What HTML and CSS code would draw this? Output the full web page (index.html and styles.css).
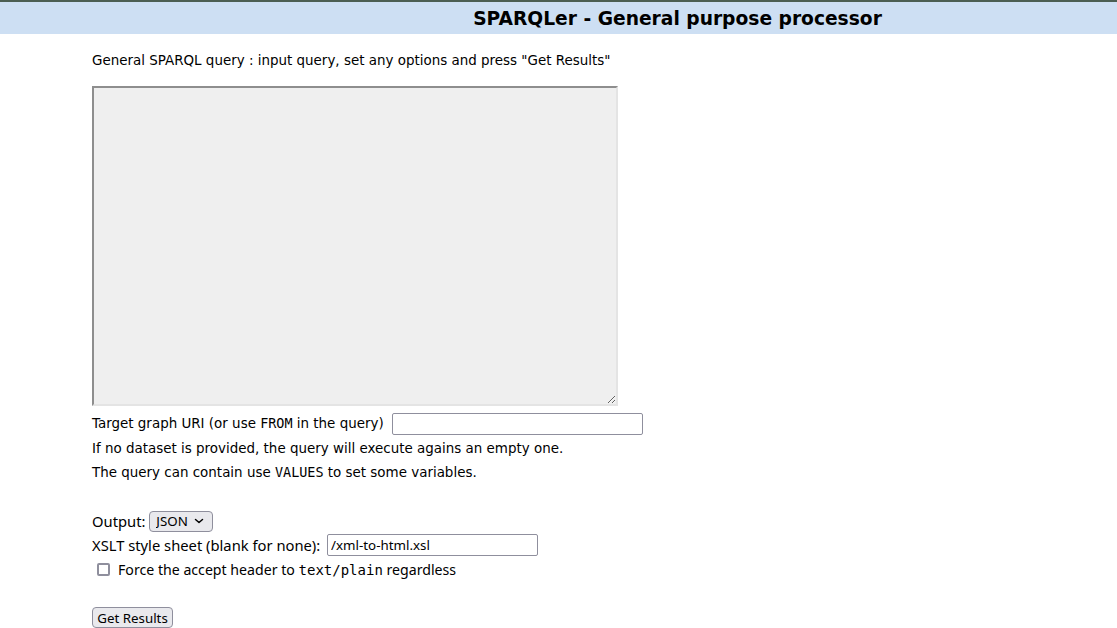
FILE: index.html
```html
<!DOCTYPE html>
<html>
<head>
<meta charset="utf-8">
<title>SPARQLer</title>
<link rel="stylesheet" href="styles.css">
</head>
<body>
<div class="header"><h1>SPARQLer - General purpose processor</h1></div>
<div class="content">
  <p class="intro">General SPARQL query : input query, set any options and press "Get Results"</p>
  <form class="form">
    <textarea class="query" name="query"></textarea>
    <div class="line first">Target graph URI (or use <code>FROM</code> in the query) <input class="graph" type="text" name="default-graph-uri"></div>
    <div class="line">If no dataset is provided, the query will execute agains an empty one.</div>
    <div class="line">The query can contain use <code>VALUES</code> to set some variables.</div>
    <div class="opts">
      <div class="oline">Output: <select class="sel"><option>JSON</option></select></div>
      <div class="oline">XSLT style sheet (blank for none): <input class="xslt" type="text" value="/xml-to-html.xsl"></div>
      <div class="oline cb"><input type="checkbox" class="chk"><span class="cblabel">Force the accept header to <code class="mono">text/plain</code> regardless</span></div>
    </div>
    <div class="submit"><button type="button" class="btn">Get Results</button></div>
  </form>
</div>
</body>
</html>
```
FILE: styles.css
```css
html, body { margin: 0; padding: 0; background: #fff; color: #000; }
body { font-family: "DejaVu Sans", Verdana, sans-serif; font-size: 13.44px; }
.header {
  border-top: 2px solid #4b5e52;
  background: #cddff3;
  height: 32px;
  display: flex;
  align-items: center;
  justify-content: center;
  padding-left: 238px;
}
.header h1 { margin: 0; font-size: 18.67px; font-weight: bold; font-family: "DejaVu Sans", Verdana, sans-serif; }
.content { padding-left: 92px; }
.intro { margin: 18px 0 0 0; line-height: 18px; }
.form { margin: 0; }
.query {
  display: block;
  margin-top: 16px;
  width: 526px; height: 320px;
  box-sizing: border-box;
  border-width: 2px;
  border-style: solid;
  border-color: #8e8e8e #e4e4e4 #e4e4e4 #8e8e8e;
  background: #efefef;
  resize: both;
  padding: 2px;
}
.line { height: 24px; display: flex; align-items: center; white-space: pre; }
.line.first { margin-top: 5px; height: 25px; }
.line code { font-family: "DejaVu Sans Mono", monospace; font-size: 13.44px; }
.graph { width: 251px; height: 22px; box-sizing: border-box; margin: 0 0 0 4px; border: 1px solid #8f8f9d; border-radius: 2px; padding: 1px 2px; background: #fff; }
.opts { margin-top: 25px; font-family: "Noto Sans", sans-serif; font-size: 14.75px; }
.oline { height: 24px; display: flex; align-items: center; white-space: pre; }
.sel {
  -webkit-appearance: none; appearance: none;
  font-family: "Noto Sans", sans-serif; font-size: 13.33px; color: #000;
  width: 64px; height: 21px; margin-left: 0;
  border: 1px solid #8f8f9d; border-radius: 4px;
  background: #e9e9ed url("data:image/svg+xml,%3Csvg xmlns='http://www.w3.org/2000/svg' width='10' height='6' viewBox='0 0 10 6'%3E%3Cpath d='M1.5 1.5 L5 4.5 L8.5 1.5' fill='none' stroke='%23000' stroke-width='1.5' stroke-linecap='round' stroke-linejoin='round'/%3E%3C/svg%3E") no-repeat right 8px center;
  padding: 0 0 0 6px;
}
.xslt { font-family: "Noto Sans", sans-serif; font-size: 13.33px; width: 211px; height: 22px; box-sizing: border-box; margin-left: 3px; border: 1px solid #8f8f9d; border-radius: 2px; padding: 1px 3px; color: #000; }
.cb { padding-left: 5px; }
.chk {
  -webkit-appearance: none; appearance: none;
  width: 13px; height: 13px; margin: 0 8px 0 0;
  box-sizing: border-box;
  border: 2px solid #8f8f9d; border-radius: 2px; background: #fff;
}
.cblabel { font-size: 14.15px; }
.mono { font-family: "DejaVu Sans Mono", monospace; font-size: 14px; }
.submit { margin-top: 26px; }
.btn { font-family: "Noto Sans", sans-serif; font-size: 13.33px; height: 21px; width: 81px; border: 1px solid #8f8f9d; border-radius: 4px; background: #e9e9ed; padding: 0 4px; color: #000; }
```
